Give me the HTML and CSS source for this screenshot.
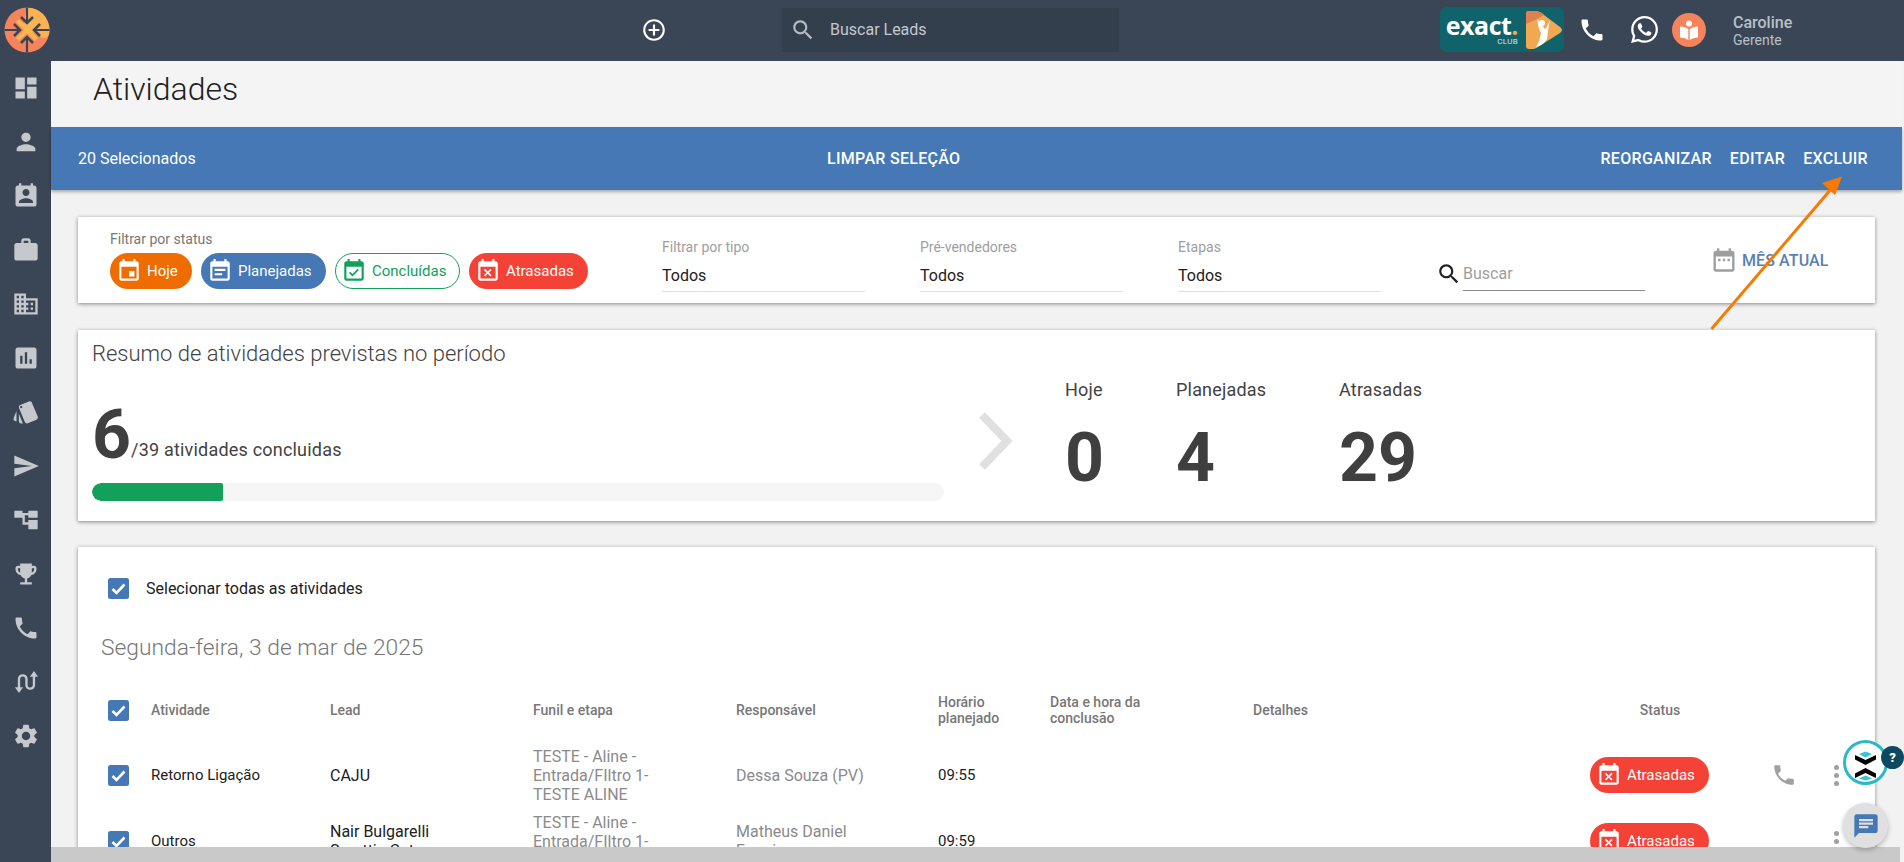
FILE: index.html
```html
<!DOCTYPE html>
<html lang="pt-BR">
<head>
<meta charset="utf-8">
<title>Atividades</title>
<link rel="stylesheet" href="styles.css">
</head>
<body>
<svg class="defs" width="0" height="0" aria-hidden="true">
  <symbol id="i-phone" viewBox="0 0 24 24"><path d="M6.62 10.79c1.44 2.83 3.76 5.14 6.59 6.59l2.2-2.2c.27-.27.67-.36 1.02-.24 1.12.37 2.33.57 3.57.57.55 0 1 .45 1 1V20c0 .55-.45 1-1 1-9.39 0-17-7.61-17-17 0-.55.45-1 1-1h3.5c.55 0 1 .45 1 1 0 1.25.2 2.45.57 3.57.11.35.03.74-.25 1.02l-2.2 2.2z"/></symbol>
  <symbol id="i-search" viewBox="0 0 24 24"><path d="M15.5 14h-.79l-.28-.27C15.41 12.59 16 11.11 16 9.5 16 5.91 13.09 3 9.5 3S3 5.91 3 9.5 5.91 16 9.5 16c1.61 0 3.09-.59 4.23-1.57l.27.28v.79l5 4.99L20.49 19l-4.99-5zm-6 0C7.01 14 5 11.99 5 9.5S7.01 5 9.5 5 14 7.01 14 9.5 11.99 14 9.5 14z"/></symbol>
  <symbol id="i-event" viewBox="0 0 24 24"><path d="M17 12h-5v5h5v-5zM16 1v2H8V1H6v2H5c-1.11 0-1.99.9-1.99 2L3 19c0 1.1.89 2 2 2h14c1.1 0 2-.9 2-2V5c0-1.1-.9-2-2-2h-1V1h-2zm3 18H5V8h14v11z"/></symbol>
  <symbol id="i-note" viewBox="0 0 24 24"><path d="M17 10H7v2h10v-2zm2-7h-1V1h-2v2H8V1H6v2H5c-1.11 0-1.99.9-1.99 2L3 19c0 1.1.89 2 2 2h14c1.1 0 2-.9 2-2V5c0-1.1-.9-2-2-2zm0 16H5V8h14v11zm-5-5H7v2h7v-2z"/></symbol>
  <symbol id="i-done" viewBox="0 0 24 24"><path d="M16.53 11.06L15.47 10l-4.88 4.88-2.12-2.12-1.06 1.06L10.59 17l5.94-5.94zM19 3h-1V1h-2v2H8V1H6v2H5c-1.11 0-1.99.9-1.99 2L3 19c0 1.1.89 2 2 2h14c1.1 0 2-.9 2-2V5c0-1.1-.9-2-2-2zm0 16H5V8h14v11z"/></symbol>
  <symbol id="i-busy" viewBox="0 0 24 24"><path d="M9.31 17l2.44-2.44L14.19 17l1.06-1.06-2.44-2.44 2.44-2.44L14.19 10l-2.44 2.44L9.31 10l-1.06 1.06 2.44 2.44-2.44 2.44L9.31 17zM19 3h-1V1h-2v2H8V1H6v2H5c-1.11 0-1.99.9-1.99 2L3 19c0 1.1.89 2 2 2h14c1.1 0 2-.9 2-2V5c0-1.1-.9-2-2-2zm0 16H5V8h14v11z"/></symbol>
  <symbol id="i-check" viewBox="0 0 21 21"><rect width="21" height="21" rx="2.5" fill="#4578b4"/><path d="M4.5 11l4 4 8-8.5" fill="none" stroke="#fff" stroke-width="2.6"/></symbol>
</svg>

<div class="app">
  <header class="topbar">
    <svg class="logo" viewBox="0 0 46 46">
      <circle cx="23" cy="23" r="22.5" fill="#f5845c"/>
      <path d="M23 .5A22.5 22.5 0 0 1 45.5 23c0 6-3 9-7 8-3-.8-4-4-8-5-6-1.500-12-7-10-14 1-4 1-8 3-11.500z" fill="#fbb250"/>
      <path d="M13.500 13.500l19 19M32.500 13.500l-19 19" stroke="#fbb74f" stroke-width="4.500"/>
      <path d="M23 .5V15M23 31v14.500M.5 23H15M31 23h14.500" stroke="#3a4556" stroke-width="2.200"/>
      <path d="M17 10l6 6 6-6M17 36l6-6 6 6M10 17l6 6-6 6M36 17l-6 6 6 6" fill="none" stroke="#3a4556" stroke-width="2.600"/>
    </svg>
    <svg class="add-icon" viewBox="0 0 24 24"><path d="M13 7h-2v4H7v2h4v4h2v-4h4v-2h-4V7zm-1-5C6.480 2 2 6.480 2 12s4.480 10 10 10 10-4.480 10-10S17.520 2 12 2zm0 18c-4.410 0-8-3.590-8-8s3.590-8 8-8 8 3.590 8 8-3.590 8-8 8z"/></svg>
    <div class="lead-search">
      <svg class="lead-search-icon"><use href="#i-search"/></svg>
      <span>Buscar Leads</span>
    </div>
    <div class="club">
      <div class="club-words"><span class="club-name">exact<i class="club-dot">.</i></span><span class="club-sub">CLUB</span></div>
      <svg class="club-play" viewBox="0 0 36 38">
        <path d="M3 0h6c3 0 6 1 9 4l16 12c2.500 2 2.500 4 0 6L12 36c-2 1.500-4 2-6 2H3c-2 0-3-1-3-3V3c0-2 1-3 3-3z" fill="#f0a950"/>
        <path d="M0 13V3c0-2 1-3 3-3h6c3 0 6 1 9 4l-7 4z" fill="#e07f50"/>
        <path d="M24 9c-2 5-4 8-5 9-2-2-3-6-8-10 1 6 2 11 4 14-1 5-2 10-5 14 4-1 8-3 11-8 1-6 1-10 3-19z" fill="#fff"/>
        <circle cx="16" cy="12" r="3" fill="#fff"/>
      </svg>
    </div>
    <svg class="top-phone"><use href="#i-phone"/></svg>
    <svg class="whats" viewBox="0 0 24 24"><path d="M17.472 14.382c-.297-.149-1.758-.867-2.030-.967-.273-.099-.471-.148-.670.150-.197.297-.767.966-.940 1.164-.173.199-.347.223-.644.075-.297-.150-1.255-.463-2.390-1.475-.883-.788-1.480-1.761-1.653-2.059-.173-.297-.018-.458.130-.606.134-.133.298-.347.446-.520.149-.174.198-.298.298-.497.099-.198.050-.371-.025-.520-.075-.149-.669-1.612-.916-2.207-.242-.579-.487-.500-.669-.510-.173-.008-.371-.010-.570-.010-.198 0-.520.074-.792.372-.272.297-1.040 1.016-1.040 2.479 0 1.462 1.065 2.875 1.213 3.074.149.198 2.096 3.200 5.077 4.487.709.306 1.262.489 1.694.625.712.227 1.360.195 1.871.118.571-.085 1.758-.719 2.006-1.413.248-.694.248-1.289.173-1.413-.074-.124-.272-.198-.570-.347m-5.421 7.403h-.004a9.870 9.870 0 0 1-5.031-1.378l-.361-.214-3.741.982.998-3.648-.235-.374a9.860 9.860 0 0 1-1.510-5.260c.001-5.450 4.436-9.884 9.888-9.884 2.640 0 5.122 1.030 6.988 2.898a9.825 9.825 0 0 1 2.893 6.994c-.003 5.450-4.437 9.884-9.885 9.884m8.413-18.297A11.815 11.815 0 0 0 12.050 0C5.495 0 .160 5.335.157 11.892c0 2.096.547 4.142 1.588 5.945L.057 24l6.305-1.654a11.882 11.882 0 0 0 5.683 1.448h.005c6.554 0 11.890-5.335 11.893-11.893a11.821 11.821 0 0 0-3.480-8.413z"/></svg>
    <div class="book">
      <svg viewBox="0 0 34 34"><circle cx="17" cy="10.500" r="3"/><path d="M8 13.500c3.500 0 6.500 1 8.300 2.800V27c-2-1.600-5-2.500-8.300-2.500zM26 13.500c-3.500 0-6.500 1-8.300 2.800V27c2-1.600 5-2.500 8.300-2.500z"/></svg>
    </div>
    <div class="user">
      <span class="user-name">Caroline</span>
      <span class="user-role">Gerente</span>
    </div>
  </header>

  <div class="shell">
    <nav class="sidebar">
      <div class="nav-item"><svg viewBox="0 0 24 24"><path d="M3 13h8V3H3v10zm0 8h8v-6H3v6zm10 0h8V11h-8v10zm0-18v6h8V3h-8z"/></svg></div>
      <div class="nav-item"><svg viewBox="0 0 24 24"><path d="M12 12c2.210 0 4-1.790 4-4s-1.790-4-4-4-4 1.790-4 4 1.790 4 4 4zm0 2c-2.670 0-8 1.340-8 4v2h16v-2c0-2.660-5.330-4-8-4z"/></svg></div>
      <div class="nav-item"><svg viewBox="0 0 24 24"><path d="M19 3h-1V1h-2v2H8V1H6v2H5c-1.110 0-2 .9-2 2v14c0 1.100.89 2 2 2h14c1.100 0 2-.9 2-2V5c0-1.100-.9-2-2-2zm-7 3c1.660 0 3 1.340 3 3s-1.340 3-3 3-3-1.340-3-3 1.340-3 3-3zm6 12H6v-1c0-2 4-3.100 6-3.100s6 1.100 6 3.100v1z"/></svg></div>
      <div class="nav-item"><svg viewBox="0 0 24 24"><path d="M20 6h-4V4c0-1.110-.89-2-2-2h-4c-1.110 0-2 .89-2 2v2H4c-1.110 0-1.990.89-1.990 2L2 19c0 1.110.89 2 2 2h16c1.110 0 2-.89 2-2V8c0-1.110-.89-2-2-2zm-6 0h-4V4h4v2z"/></svg></div>
      <div class="nav-item"><svg viewBox="0 0 24 24"><path d="M12 7V3H2v18h20V7H12zM6 19H4v-2h2v2zm0-4H4v-2h2v2zm0-4H4V9h2v2zm0-4H4V5h2v2zm4 12H8v-2h2v2zm0-4H8v-2h2v2zm0-4H8V9h2v2zm0-4H8V5h2v2zm10 12h-8v-2h2v-2h-2v-2h2v-2h-2V9h8v10zm-2-8h-2v2h2v-2zm0 4h-2v2h2v-2z"/></svg></div>
      <div class="nav-item"><svg viewBox="0 0 24 24"><path d="M19 3H5c-1.100 0-2 .9-2 2v14c0 1.100.9 2 2 2h14c1.100 0 2-.9 2-2V5c0-1.100-.9-2-2-2zM9 17H7v-7h2v7zm4 0h-2V7h2v10zm4 0h-2v-4h2v4z"/></svg></div>
      <div class="nav-item"><svg viewBox="0 0 24 24"><path d="M2.530 19.650l1.340.56v-9.030l-2.430 5.860c-.41 1.020.08 2.190 1.090 2.610zm19.500-3.700L17.070 3.980c-.31-.75-1.040-1.210-1.810-1.230-.26 0-.53.04-.79.15L7.100 5.950c-.75.31-1.210 1.030-1.230 1.800-.01.27.04.54.15.8l4.960 11.970c.31.76 1.050 1.220 1.830 1.230.26 0 .52-.05.77-.15l7.360-3.050c1.020-.42 1.510-1.590 1.090-2.600zM7.880 8.750c-.55 0-1-.45-1-1s.45-1 1-1 1 .45 1 1-.45 1-1 1zm-2 11c0 1.100.9 2 2 2h1.450l-3.450-8.340v6.340z"/></svg></div>
      <div class="nav-item"><svg viewBox="0 0 24 24"><path d="M2.010 21L23 12 2.010 3 2 10l15 2-15 2z"/></svg></div>
      <div class="nav-item"><svg viewBox="0 0 24 24"><path d="M2 4h7v2h5V4h8v6h-8V8h-3v6h3v-2h8v8h-8v-4h-5V8H9v2H2z"/></svg></div>
      <div class="nav-item"><svg viewBox="0 0 24 24"><path d="M19 5h-2V3H7v2H5c-1.100 0-2 .9-2 2v1c0 2.550 1.920 4.630 4.390 4.940.63 1.500 1.980 2.630 3.610 2.960V19H7v2h10v-2h-4v-3.100c1.630-.33 2.980-1.460 3.610-2.960C19.080 12.630 21 10.550 21 8V7c0-1.100-.9-2-2-2zM5 8V7h2v3.820C5.840 10.400 5 9.300 5 8zm14 0c0 1.300-.84 2.400-2 2.820V7h2v1z"/></svg></div>
      <div class="nav-item"><svg viewBox="0 0 24 24"><use href="#i-phone"/></svg></div>
      <div class="nav-item"><svg viewBox="0 0 24 24"><path class="nav-line" d="M6 18V9.500a3.200 3.200 0 0 1 6.400 0v5a3.200 3.200 0 0 0 6.400 0V6"/><path d="M2.500 16.500h7L6 21.500zM15.300 7.500h7L18.800 2.500z"/></svg></div>
      <div class="nav-item"><svg viewBox="0 0 24 24"><path d="M19.140 12.940c.04-.3.06-.61.06-.94 0-.32-.02-.64-.07-.94l2.030-1.580c.18-.14.23-.41.12-.61l-1.920-3.320c-.12-.22-.37-.29-.59-.22l-2.390.96c-.5-.38-1.030-.7-1.620-.94l-.36-2.540c-.04-.24-.24-.41-.48-.41h-3.840c-.24 0-.43.17-.47.41l-.36 2.540c-.59.24-1.130.57-1.620.94l-2.390-.96c-.22-.08-.47 0-.59.22L2.740 8.870c-.12.21-.08.47.12.61l2.030 1.580c-.05.3-.09.63-.09.94s.02.64.07.94l-2.030 1.580c-.18.14-.23.41-.12.61l1.920 3.320c.12.22.37.29.59.22l2.390-.96c.5.38 1.030.7 1.620.94l.36 2.540c.05.24.24.41.48.41h3.840c.24 0 .44-.17.47-.41l.36-2.540c.59-.24 1.130-.56 1.620-.94l2.390.96c.22.08.47 0 .59-.22l1.920-3.320c.12-.22.07-.47-.12-.61l-2.010-1.580zM12 15.600c-1.980 0-3.600-1.620-3.600-3.600s1.620-3.600 3.600-3.600 3.600 1.620 3.600 3.600-1.620 3.600-3.600 3.600z"/></svg></div>
    </nav>

    <main class="main">
      <div class="page-head"><h1 class="page-title">Atividades</h1></div>
      <div class="selection-bar">
        <span class="sel-count">20 Selecionados</span>
        <a class="sel-clear">LIMPAR SELEÇÃO</a>
        <div class="sel-actions"><a>REORGANIZAR</a><a>EDITAR</a><a>EXCLUIR</a></div>
      </div>

      <section class="card filters">
        <div class="status-filter">
          <div class="status-label">Filtrar por status</div>
          <div class="pills">
            <span class="pill pill-today"><svg><use href="#i-event"/></svg>Hoje</span>
            <span class="pill pill-plan"><svg><use href="#i-note"/></svg>Planejadas</span>
            <span class="pill pill-done"><svg><use href="#i-done"/></svg>Concluídas</span>
            <span class="pill pill-late"><svg><use href="#i-busy"/></svg>Atrasadas</span>
          </div>
        </div>
        <div class="select"><label>Filtrar por tipo</label><div class="select-value">Todos</div></div>
        <div class="select"><label>Pré-vendedores</label><div class="select-value">Todos</div></div>
        <div class="select"><label>Etapas</label><div class="select-value">Todos</div></div>
        <div class="find">
          <svg><use href="#i-search"/></svg>
          <span class="find-input">Buscar</span>
        </div>
        <div class="period">
          <svg viewBox="0 0 24 24"><path d="M9 11H7v2h2v-2zm4 0h-2v2h2v-2zm4 0h-2v2h2v-2zm2-7h-1V2h-2v2H8V2H6v2H5c-1.110 0-1.990.9-1.990 2L3 20c0 1.100.89 2 2 2h14c1.100 0 2-.9 2-2V6c0-1.100-.9-2-2-2zm0 16H5V9h14v11z"/></svg>
          <span>MÊS ATUAL</span>
        </div>
      </section>

      <section class="card summary">
        <h2 class="summary-title">Resumo de atividades previstas no período</h2>
        <div class="summary-body">
          <div class="progress-col">
            <div class="progress-head"><span class="big">6</span><span class="progress-text">/39 atividades concluidas</span></div>
            <div class="track"><div class="fill" style="width:15.4%"></div></div>
          </div>
          <svg class="chevron" viewBox="0 0 35 58"><path d="M4 3l25 26L4 55"/></svg>
          <div class="stat stat-a"><span class="stat-label">Hoje</span><span class="big">0</span></div>
          <div class="stat stat-b"><span class="stat-label">Planejadas</span><span class="big">4</span></div>
          <div class="stat"><span class="stat-label">Atrasadas</span><span class="big">29</span></div>
        </div>
      </section>

      <section class="card list">
        <div class="select-all"><svg class="check"><use href="#i-check"/></svg><span>Selecionar todas as atividades</span></div>
        <h3 class="day">Segunda-feira, 3 de mar de 2025</h3>
        <div class="row row-head">
          <svg class="check"><use href="#i-check"/></svg>
          <span>Atividade</span><span>Lead</span><span>Funil e etapa</span><span>Responsável</span>
          <span>Horário<br>planejado</span><span>Data e hora da<br>conclusão</span><span>Detalhes</span>
          <span class="status-head">Status</span>
        </div>
        <div class="row">
          <svg class="check"><use href="#i-check"/></svg>
          <span class="kind">Retorno Ligação</span>
          <span class="lead">CAJU</span>
          <span class="muted">TESTE - Aline -<br>Entrada/FIltro 1-<br>TESTE ALINE</span>
          <span class="muted">Dessa Souza (PV)</span>
          <span class="time">09:55</span>
          <span></span><span></span>
          <span class="pill pill-late"><svg><use href="#i-busy"/></svg>Atrasadas</span>
          <svg class="row-phone"><use href="#i-phone"/></svg>
          <span class="dots"><i></i><i></i><i></i></span>
        </div>
        <div class="row">
          <svg class="check"><use href="#i-check"/></svg>
          <span class="kind">Outros</span>
          <span class="lead">Nair Bulgarelli<br>Scarttin Cut</span>
          <span class="muted">TESTE - Aline -<br>Entrada/FIltro 1-<br>TESTE ALINE</span>
          <span class="muted">Matheus Daniel<br>Ferreira</span>
          <span class="time">09:59</span>
          <span></span><span></span>
          <span class="pill pill-late"><svg><use href="#i-busy"/></svg>Atrasadas</span>
          <span></span>
          <span class="dots"><i></i><i></i><i></i></span>
        </div>
      </section>
    </main>
  </div>

  <div class="h-scroll"></div>

  <svg class="callout" viewBox="0 0 1904 862">
    <path d="M1711.500 329L1832 188" stroke="#f97a00" stroke-width="3" fill="none"/>
    <path d="M1842 176.500l-20 6.500 13 12z" fill="#f97a00"/>
  </svg>

  <div class="help-widget">
    <svg viewBox="0 0 39 39">
      <path d="M9 12l10.500 5L30 12v4.500L19.500 22 9 16.500z" fill="#000"/>
      <path d="M13 11l6.500-2.500L26 11l-6.500 3.500z" fill="#38c6d4"/>
      <path d="M9 35l10.500-5L30 35v-4.500L19.500 25 9 30.500z" fill="#000"/>
      <path d="M13 35.500l6.500 2L26 35.500l-6.500-3z" fill="#38c6d4"/>
    </svg>
    <span class="help-badge">?</span>
  </div>
  <div class="chat-widget">
    <svg viewBox="0 0 24 24"><path d="M20 2H4c-1.100 0-1.990.9-1.990 2L2 22l4-4h14c1.100 0 2-.9 2-2V4c0-1.100-.9-2-2-2zM6 9h12v2H6V9zm8 5H6v-2h8v2zm4-6H6V6h12v2z"/></svg>
  </div>
</div>
</body>
</html>
```
FILE: styles.css
```css
* { box-sizing: border-box; }
html, body { margin: 0; height: 100%; overflow: hidden; }
body { font-family: Roboto, "Liberation Sans", sans-serif; color: #212121; background: #fff; }
.defs { position: absolute; }
a { color: inherit; }

.app { position: relative; width: 1904px; height: 862px; overflow: hidden; display: flex; flex-direction: column; background: #3a4556; }

/* top bar */
.topbar { height: 61px; flex: none; display: flex; align-items: center; padding-bottom: 2px; }
.logo { width: 46px; height: 46px; margin-left: 4px; flex: none; }
.add-icon { width: 26px; height: 26px; margin-left: 591px; fill: #fff; flex: none; }
.lead-search { width: 337px; height: 44px; margin-left: 115px; background: #333f4c; display: flex; align-items: center; color: #c3c9d0; font-size: 16px; flex: none; }
.lead-search-icon { width: 26px; height: 26px; margin-left: 8px; margin-right: 14px; fill: #b5bbc2; }
.club { width: 124px; height: 45px; margin-left: 321px; background: #10636a; border-radius: 7px; display: flex; align-items: center; flex: none; padding-left: 8px; }
.club-words { width: 70px; margin-right: 8px; display: flex; flex-direction: column; align-items: flex-end; }
.club-name { font-family: "Open Sans", sans-serif; font-weight: 700; font-size: 25px; line-height: 24px; color: #fff; letter-spacing: -.5px; white-space: nowrap; }
.club-dot { font-style: normal; color: #f0a950; }
.club-sub { font-size: 8px; line-height: 9px; color: #d7e4e5; letter-spacing: .3px; }
.club-play { width: 36px; height: 38px; margin-left: 0; flex: none; }
.top-phone { width: 28px; height: 28px; margin-left: 14px; fill: #fff; flex: none; }
.whats { width: 27px; height: 27px; margin-left: 25px; fill: #fff; flex: none; }
.book { width: 34px; height: 34px; margin-left: 14px; border-radius: 50%; background: #f5845c; flex: none; }
.book svg { display: block; width: 34px; height: 34px; fill: #fff; }
.user { margin: 2px 0 0 27px; display: flex; flex-direction: column; color: #b9c0c9; }
.user-name { font-size: 16px; line-height: 19px; font-weight: 500; }
.user-role { font-size: 14px; line-height: 16px; }

/* layout */
.shell { flex: 1; min-height: 0; display: flex; }
.sidebar { width: 51px; flex: none; display: flex; flex-direction: column; }
.nav-item { height: 54px; flex: none; display: flex; align-items: center; justify-content: center; }
.nav-item svg { width: 28px; height: 28px; fill: #c5c8cd; }
.nav-line { fill: none; stroke: #c5c8cd; stroke-width: 2; }
.main { flex: 1; min-width: 0; background: #f2f2f2; padding-right: 2px; }

.page-head { height: 66px; background: #f4f4f4; padding: 10px 0 0 42px; }
.page-title { margin: 0; font-size: 32px; line-height: 37px; font-weight: 300; color: #212121; }

.selection-bar { height: 63px; background: #4578b4; color: #fff; display: flex; align-items: center; padding: 0 34px 1px 27px; box-shadow: 0 2px 3px rgba(0,0,0,.3); position: relative; font-size: 16px; font-weight: 500; letter-spacing: .3px; }
.sel-count { width: 749px; font-size: 16px; font-weight: 400; letter-spacing: 0; }
.sel-actions { margin-left: auto; display: flex; gap: 18px; }

.card { margin: 27px 27px 0; background: #fff; box-shadow: 0 1px 4px rgba(0,0,0,.45); }

/* filters */
.filters { height: 86px; display: flex; padding-left: 32px; position: relative; }
.status-filter { width: 552px; flex: none; padding-top: 14px; }
.status-label { font-size: 14px; line-height: 16px; color: #777; }
.pills { display: flex; gap: 9px; margin-top: 6px; }
.pill { height: 36px; border-radius: 18px; display: inline-flex; align-items: center; color: #fff; font-size: 15px; padding-left: 6px; flex: none; }
.pill svg { width: 26px; height: 26px; fill: currentColor; margin-right: 5px; flex: none; }
.pill-today { width: 82px; background: #ef6c00; }
.pill-plan { width: 125px; background: #4578b4; }
.pill-done { width: 125px; color: #12a05a; background: #fff; border: 1px solid #12a05a; padding-left: 5px; }
.pill-late { width: 119px; background: #f44336; }
.select { width: 203px; margin-right: 55px; flex: none; padding-top: 22px; }
.select label { display: block; font-size: 14px; line-height: 16px; color: #9e9e9e; }
.select-value { margin-top: 11px; font-size: 16px; line-height: 20px; height: 26px; color: #212121; border-bottom: 1px solid #e0e0e0; }
.find { width: 216px; flex: none; margin-left: 2px; padding-top: 41px; display: flex; align-items: flex-start; }
.find svg { width: 26px; height: 26px; fill: #212121; flex: none; margin-top: 3px; margin-right: 1px; margin-left: -2px; }
.find-input { width: 182px; height: 33px; line-height: 32px; font-size: 16px; color: #9e9e9e; border-bottom: 1px solid #8a8a8a; }
.period { display: flex; align-items: center; gap: 4px; margin-left: 56px; height: 86px; color: #5a7fb3; font-size: 16px; font-weight: 500; letter-spacing: .1px; }
.period svg { width: 28px; height: 28px; fill: #9e9e9e; flex: none; }

/* summary */
.summary { height: 191px; padding: 11px 0 0 14px; }
.summary-title { margin: 0; font-size: 22px; line-height: 26px; font-weight: 300; color: #424242; }
.summary-body { display: flex; margin-top: 13px; }
.progress-col { width: 852px; padding-top: 19px; flex: none; }
.big { font-size: 68px; line-height: 72px; font-weight: 700; color: #3f3f3f; }
.progress-head { height: 72px; line-height: 72px; white-space: nowrap; }
.progress-text { font-size: 18px; letter-spacing: .2px; color: #424242; vertical-align: 2px; }
.track { margin-top: 12px; height: 18px; border-radius: 9px; background: #f6f6f6; overflow: hidden; }
.fill { height: 18px; background: #12a05a; border-radius: 9px 2px 2px 9px; }
.chevron { width: 35px; height: 58px; margin: 32px 0 0 34px; flex: none; fill: none; stroke: #e0e0e0; stroke-width: 8; }
.stat { display: flex; flex-direction: column; }
.stat-a { margin-left: 52px; width: 111px; }
.stat-b { width: 163px; }
.stat-label { font-size: 18px; line-height: 20px; letter-spacing: .2px; color: #424242; }
.stat .big { margin-top: 22px; }

/* list */
.list { margin-top: 26px; height: 400px; padding: 31px 0 0 30px; }
.check { width: 21px; height: 21px; flex: none; display: block; }
.select-all { display: flex; align-items: center; gap: 17px; font-size: 16px; line-height: 21px; color: #212121; }
.day { margin: 35px 0 0 -7px; font-size: 22.8px; line-height: 28px; font-weight: 300; color: #777; }
.row { display: grid; grid-template-columns: 43px 179px 203px 203px 202px 112px 203px 337px 183px 64px auto; align-items: center; height: 66px; font-size: 14px; line-height: 19px; }
.row-head { height: 64px; margin-top: 16px; font-size: 14px; line-height: 16px; font-weight: 500; color: #777; }
.status-head { width: 140px; text-align: center; }
.kind { font-size: 15px; color: #212121; }
.lead { font-size: 16px; color: #212121; }
.time { font-size: 15px; color: #212121; }
.muted { font-size: 16px; color: #8a8a8a; }
.row-phone { width: 26px; height: 26px; fill: #a0a0a0; margin-left: -2px; }
.dots { display: flex; flex-direction: column; gap: 3px; width: 5px; margin-left: -3px; }
.dots i { width: 5px; height: 5px; border-radius: 50%; background: #a0a0a0; display: block; }

/* overlays */
.h-scroll { position: absolute; left: 51px; right: 4px; bottom: 0; height: 15px; background: #c9c9c9; }
.callout { position: absolute; inset: 0; width: 1904px; height: 862px; pointer-events: none; }
.help-widget { position: absolute; left: 1843px; top: 740px; width: 45px; height: 45px; border-radius: 50%; background: #fff; border: 3px solid #2bb8c8; }
.help-widget svg { display: block; width: 39px; height: 39px; }
.help-badge { position: absolute; left: 35px; top: 3px; width: 23px; height: 23px; border-radius: 50%; background: #0d4a60; color: #fff; font-size: 13px; font-weight: 900; line-height: 23px; text-align: center; }
.chat-widget { position: absolute; left: 1843px; top: 803px; width: 45px; height: 45px; border-radius: 50%; background: #e0e0e0; box-shadow: 0 2px 5px rgba(0,0,0,.25); display: flex; align-items: center; justify-content: center; }
.chat-widget svg { width: 28px; height: 28px; fill: #4578b4; }
```
